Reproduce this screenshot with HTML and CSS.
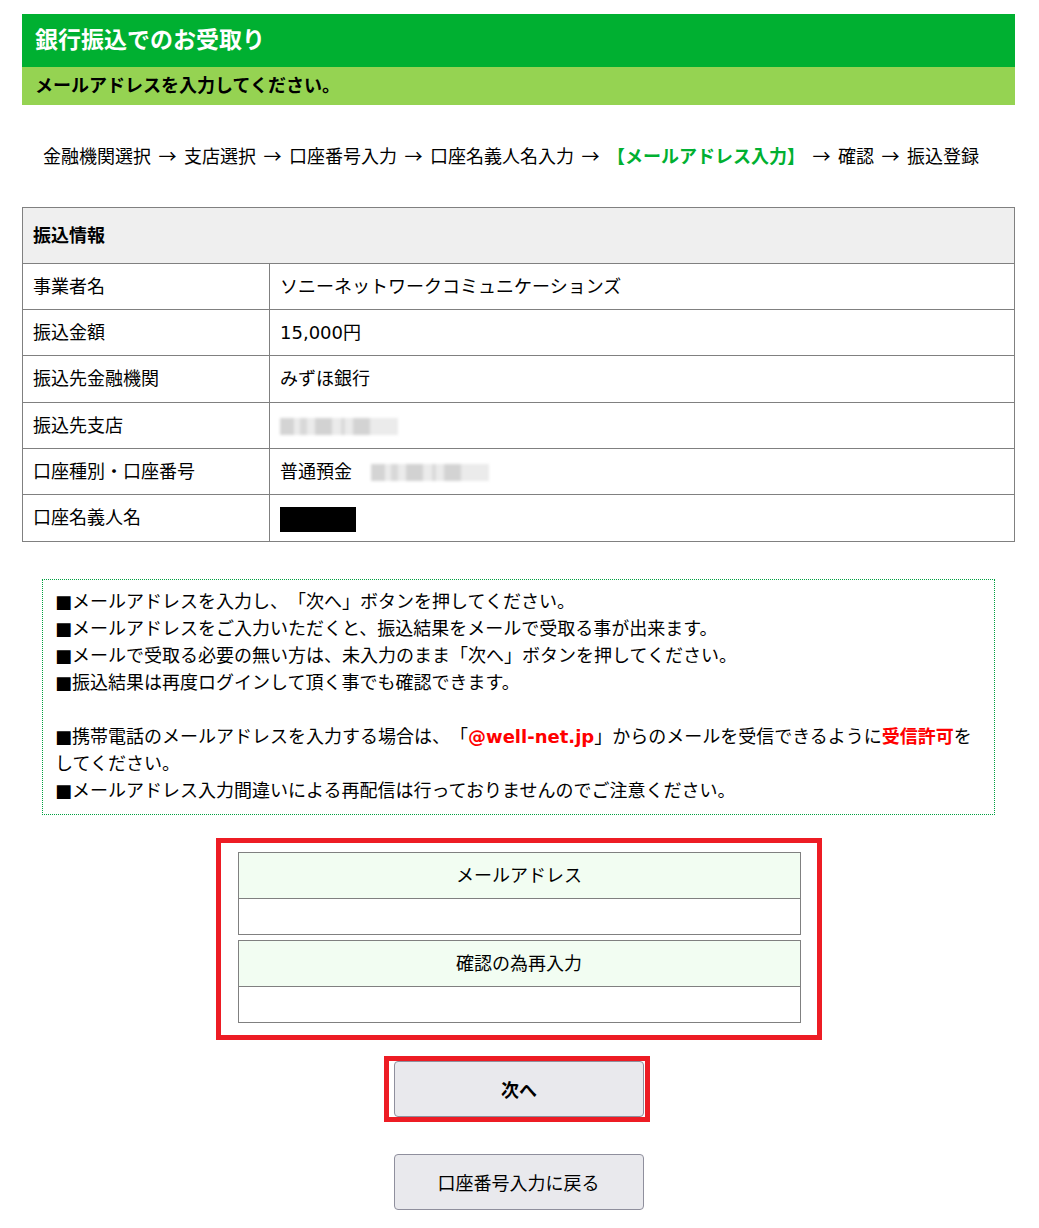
FILE: index.html
```html
<!DOCTYPE html>
<html lang="ja">
<head>
<meta charset="utf-8">
<title>銀行振込でのお受取り</title>
<link rel="stylesheet" href="styles.css">
</head>
<body>
<div class="page">
  <h1 class="title">銀行振込でのお受取り</h1>
  <h2 class="subtitle">メールアドレスを入力してください。</h2>
  <p class="steps">金融機関選択<span class="arr">→</span>支店選択<span class="arr">→</span>口座番号入力<span class="arr">→</span>口座名義人名入力<span class="arr">→</span><strong class="current">【メールアドレス入力】</strong><span class="arr">→</span>確認<span class="arr">→</span>振込登録</p>

  <table class="info">
    <tr><th colspan="2">振込情報</th></tr>
    <tr><td class="label">事業者名</td><td>ソニーネットワークコミュニケーションズ</td></tr>
    <tr><td class="label">振込金額</td><td>15,000円</td></tr>
    <tr><td class="label">振込先金融機関</td><td>みずほ銀行</td></tr>
    <tr><td class="label">振込先支店</td><td><span class="blur"></span></td></tr>
    <tr><td class="label">口座種別・口座番号</td><td>普通預金<span class="blur blur-num"></span></td></tr>
    <tr><td class="label">口座名義人名</td><td><span class="masked"></span></td></tr>
  </table>

  <div class="notice">
    <p>■メールアドレスを入力し、「次へ」ボタンを押してください。</p>
    <p>■メールアドレスをご入力いただくと、振込結果をメールで受取る事が出来ます。</p>
    <p>■メールで受取る必要の無い方は、未入力のまま「次へ」ボタンを押してください。</p>
    <p>■振込結果は再度ログインして頂く事でも確認できます。</p>
    <p class="gap">■携帯電話のメールアドレスを入力する場合は、「<span class="em">@well-net.jp</span>」からのメールを受信できるように<span class="em">受信許可</span>を<br>してください。</p>
    <p>■メールアドレス入力間違いによる再配信は行っておりませんのでご注意ください。</p>
  </div>

  <div class="form">
    <div class="form-frame">
      <div class="field">
        <div class="field-label">メールアドレス</div>
        <input class="field-input" type="email" aria-label="メールアドレス">
      </div>
      <div class="field">
        <div class="field-label">確認の為再入力</div>
        <input class="field-input" type="email" aria-label="確認の為再入力">
      </div>
    </div>
    <div class="next-frame"><button class="btn btn-next" type="button">次へ</button></div>
    <button class="btn btn-back" type="button">口座番号入力に戻る</button>
  </div>
</div>
</body>
</html>
```

FILE: styles.css
```css
html, body {
  margin: 0;
  padding: 0;
  background: #fff;
}

body {
  font-family: "DejaVu Sans", "Noto Sans CJK JP", sans-serif;
  font-size: 18px;
  color: #000;
  text-spacing-trim: space-all;
}

.page {
  padding: 14px 24px 0 22px;
}

.title {
  margin: 0;
  padding: 0 13px;
  background: #00b031;
  color: #fff;
  font-size: 23px;
  font-weight: bold;
  line-height: 53px;
}

.subtitle {
  margin: 0;
  padding: 0 13px;
  background: #95d352;
  color: #000;
  font-size: 18px;
  font-weight: bold;
  line-height: 38px;
}

.steps {
  margin: 0;
  padding: 37px 21px;
  line-height: 27px;
  white-space: nowrap;
}

.arr {
  font-family: "Noto Sans CJK JP", sans-serif;
  margin: 0 7.5px;
}

.current {
  color: #00b031;
  font-weight: bold;
}

.info {
  width: 100%;
  border-collapse: collapse;
}

.info th,
.info td {
  border: 1px solid #808080;
  padding: 9.1px 10px;
  line-height: 27px;
  text-align: left;
  font-weight: normal;
  vertical-align: middle;
}

.info th {
  background: #efefef;
  font-weight: bold;
  padding: 14px 10px;
}

.info .label {
  width: 226px;
}

.blur {
  display: inline-block;
  vertical-align: middle;
  width: 118px;
  height: 17px;
  background: linear-gradient(90deg,
    #d4d4d4 0 12%, #ebebeb 12% 17%, #d8d8d8 17% 23%, #ebebeb 23% 30%,
    #d2d2d2 30% 44%, #ebebeb 44% 52%, #dadada 52% 55%, #ebebeb 55% 62%,
    #d3d3d3 62% 76%, #ebebeb 76% 100%);
  filter: blur(1.5px);
}

.blur-num {
  margin-left: 19px;
}

.masked {
  display: inline-block;
  vertical-align: middle;
  width: 76px;
  height: 25px;
  background: #000;
}

.notice {
  margin: 37px 20px 0;
  border: 1px dotted #00a040;
  padding: 8px 12px 10px;
  line-height: 27px;
}

.notice p {
  margin: 0;
}

.notice .gap {
  margin-top: 27px;
}

.em {
  color: #ff0000;
  font-weight: bold;
}

.form {
  display: flex;
  flex-direction: column;
  align-items: center;
  margin-top: 23px;
}

.form-frame {
  box-sizing: border-box;
  width: 606px;
  border: 5px solid #ed1c24;
  padding: 9px 16px 12px 17px;
  display: flex;
  flex-direction: column;
  gap: 5px;
}

.field {
  border: 1px solid #808080;
}

.field-label {
  background: #f2fdf2;
  border-bottom: 1px solid #808080;
  height: 45px;
  line-height: 45px;
  text-align: center;
}

.field-input {
  display: block;
  box-sizing: border-box;
  width: 100%;
  height: 35px;
  margin: 0;
  border: 0;
  padding: 0 8px;
  background: #fff;
  font: inherit;
  outline: none;
}

.next-frame {
  margin: 16px 3px 0 0;
  border: 5px solid #ed1c24;
  padding: 0 1px 0 5px;
  display: flex;
}

.btn {
  box-sizing: border-box;
  width: 250px;
  height: 56px;
  margin: 0;
  padding: 0;
  background: #e9e9ed;
  border: 1px solid #8f8f9d;
  border-radius: 4px;
  color: #000;
  font-family: "DejaVu Sans", "Noto Sans CJK JP", sans-serif;
  font-size: 18px;
}

.btn-next {
  font-weight: bold;
}

.btn-back {
  margin-top: 32px;
}
```
